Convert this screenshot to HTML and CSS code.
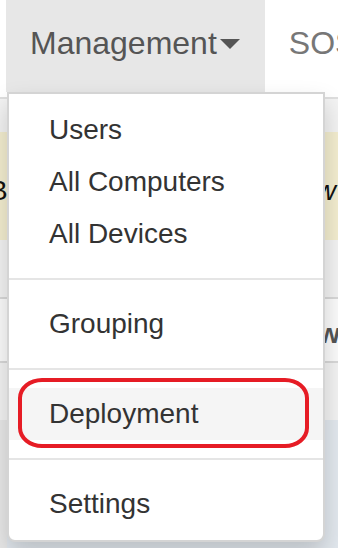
FILE: index.html
```html
<!DOCTYPE html>
<html lang="en">

<head>
    <meta charset="UTF-8">
    <meta name="viewport" content="width=device-width, initial-scale=1.0">
    <title>Management Menu</title>
    <link rel="stylesheet" href="styles.css">
</head>

<body>
    <div class="page">
        <nav class="navbar">
            <ul class="nav">
                <li class="nav-item open">
                    <a href="#" class="nav-link">Management<span class="caret"></span></a>
                    <ul class="dropdown-menu">
                        <li><a href="#">Users</a></li>
                        <li><a href="#">All Computers</a></li>
                        <li><a href="#">All Devices</a></li>
                        <li class="divider"></li>
                        <li><a href="#">Grouping</a></li>
                        <li class="divider"></li>
                        <li class="active"><a href="#">Deployment</a></li>
                        <li class="divider"></li>
                        <li><a href="#">Settings</a></li>
                    </ul>
                </li>
                <li class="nav-item"><a href="#" class="nav-link sos">SOS</a></li>
            </ul>
        </nav>

        <!-- page content behind the open menu -->
        <div class="strip"></div>
        <div class="alert">
            <span class="alert-start">B</span>
            <em class="alert-end">w</em>
        </div>
        <div class="strip tall"></div>
        <div class="table-row">
            <span class="cell-end">w</span>
        </div>
        <div class="strip tall"></div>
        <div class="panel">
            <div class="panel-side"></div>
            <div class="panel-main"></div>
        </div>

        <div class="highlight"></div>
    </div>
</body>
</html>
```

FILE: styles.css
```css
/* Global Styles */
* {
    margin: 0;
    padding: 0;
    box-sizing: border-box;
}

body {
    font-family: 'Liberation Sans', Arial, sans-serif;
    background-color: #f4f4f4;
    color: #333;
    overflow: hidden;
}

a {
    text-decoration: none;
    color: inherit;
}

ul {
    list-style: none;
}

.page {
    position: relative;
    width: 338px;
    height: 548px;
    overflow: hidden;
}

/* Navbar */
.navbar {
    background-color: #fff;
    border-bottom: 2px solid #dedede;
    height: 99px;
    padding-left: 6px;
}

.nav {
    display: flex;
}

.nav-item {
    position: relative;
}

.nav-link {
    display: block;
    height: 92px;
    padding: 23px 25px 0 24px;
    font-size: 32px;
    line-height: 40px;
    color: #777;
    white-space: nowrap;
}

.open .nav-link {
    background-color: #e7e7e7;
    color: #555;
}

.caret {
    display: inline-block;
    width: 0;
    height: 0;
    margin-left: 3px;
    vertical-align: 5px;
    border-top: 10px solid #555;
    border-left: 10px solid transparent;
    border-right: 10px solid transparent;
}

/* Dropdown */
.dropdown-menu {
    position: absolute;
    top: 100%;
    left: 1px;
    width: 318px;
    padding: 10px 0;
    background-color: #fff;
    border: 2px solid rgba(0, 0, 0, 0.17);
    border-radius: 0 0 8px 8px;
    box-shadow: 0 12px 24px rgba(0, 0, 0, 0.175);
    z-index: 10;
}

.dropdown-menu a {
    display: block;
    padding: 6px 40px;
    font-size: 28px;
    line-height: 40px;
    color: #333;
    white-space: nowrap;
}

.dropdown-menu .active a {
    background-color: #f5f5f5;
}

.divider {
    height: 2px;
    margin: 18px 0;
    background-color: #e5e5e5;
}

/* Content behind the menu */
.strip {
    height: 33px;
    background-color: #f3f3f3;
}

.strip.tall {
    height: 57px;
}

.alert {
    display: flex;
    justify-content: space-between;
    height: 108px;
    padding-top: 39px;
    background-color: #f3edcf;
    font-size: 28px;
    line-height: 40px;
    color: #111;
}

.alert-start {
    margin-left: -11px;
}

.alert-end {
    margin-right: 2px;
}

.table-row {
    display: flex;
    justify-content: flex-end;
    height: 66px;
    padding-top: 15px;
    background-color: #fbfbfb;
    border-top: 2px solid #d8d8d8;
    border-bottom: 2px solid #d8d8d8;
    font-size: 28px;
    font-weight: bold;
    line-height: 40px;
    color: #555;
}

.cell-end {
    margin-right: -2px;
}

.panel {
    display: flex;
    height: 128px;
}

.panel-side {
    width: 7px;
    background-color: #e8e8e8;
}

.panel-main {
    flex: 1;
    background-color: #e2e8ee;
}

/* Red annotation round the Deployment item */
.highlight {
    position: absolute;
    top: 378px;
    left: 18px;
    width: 291px;
    height: 70px;
    border: 4px solid #e61c25;
    border-radius: 24px / 20px;
    z-index: 20;
}
```
